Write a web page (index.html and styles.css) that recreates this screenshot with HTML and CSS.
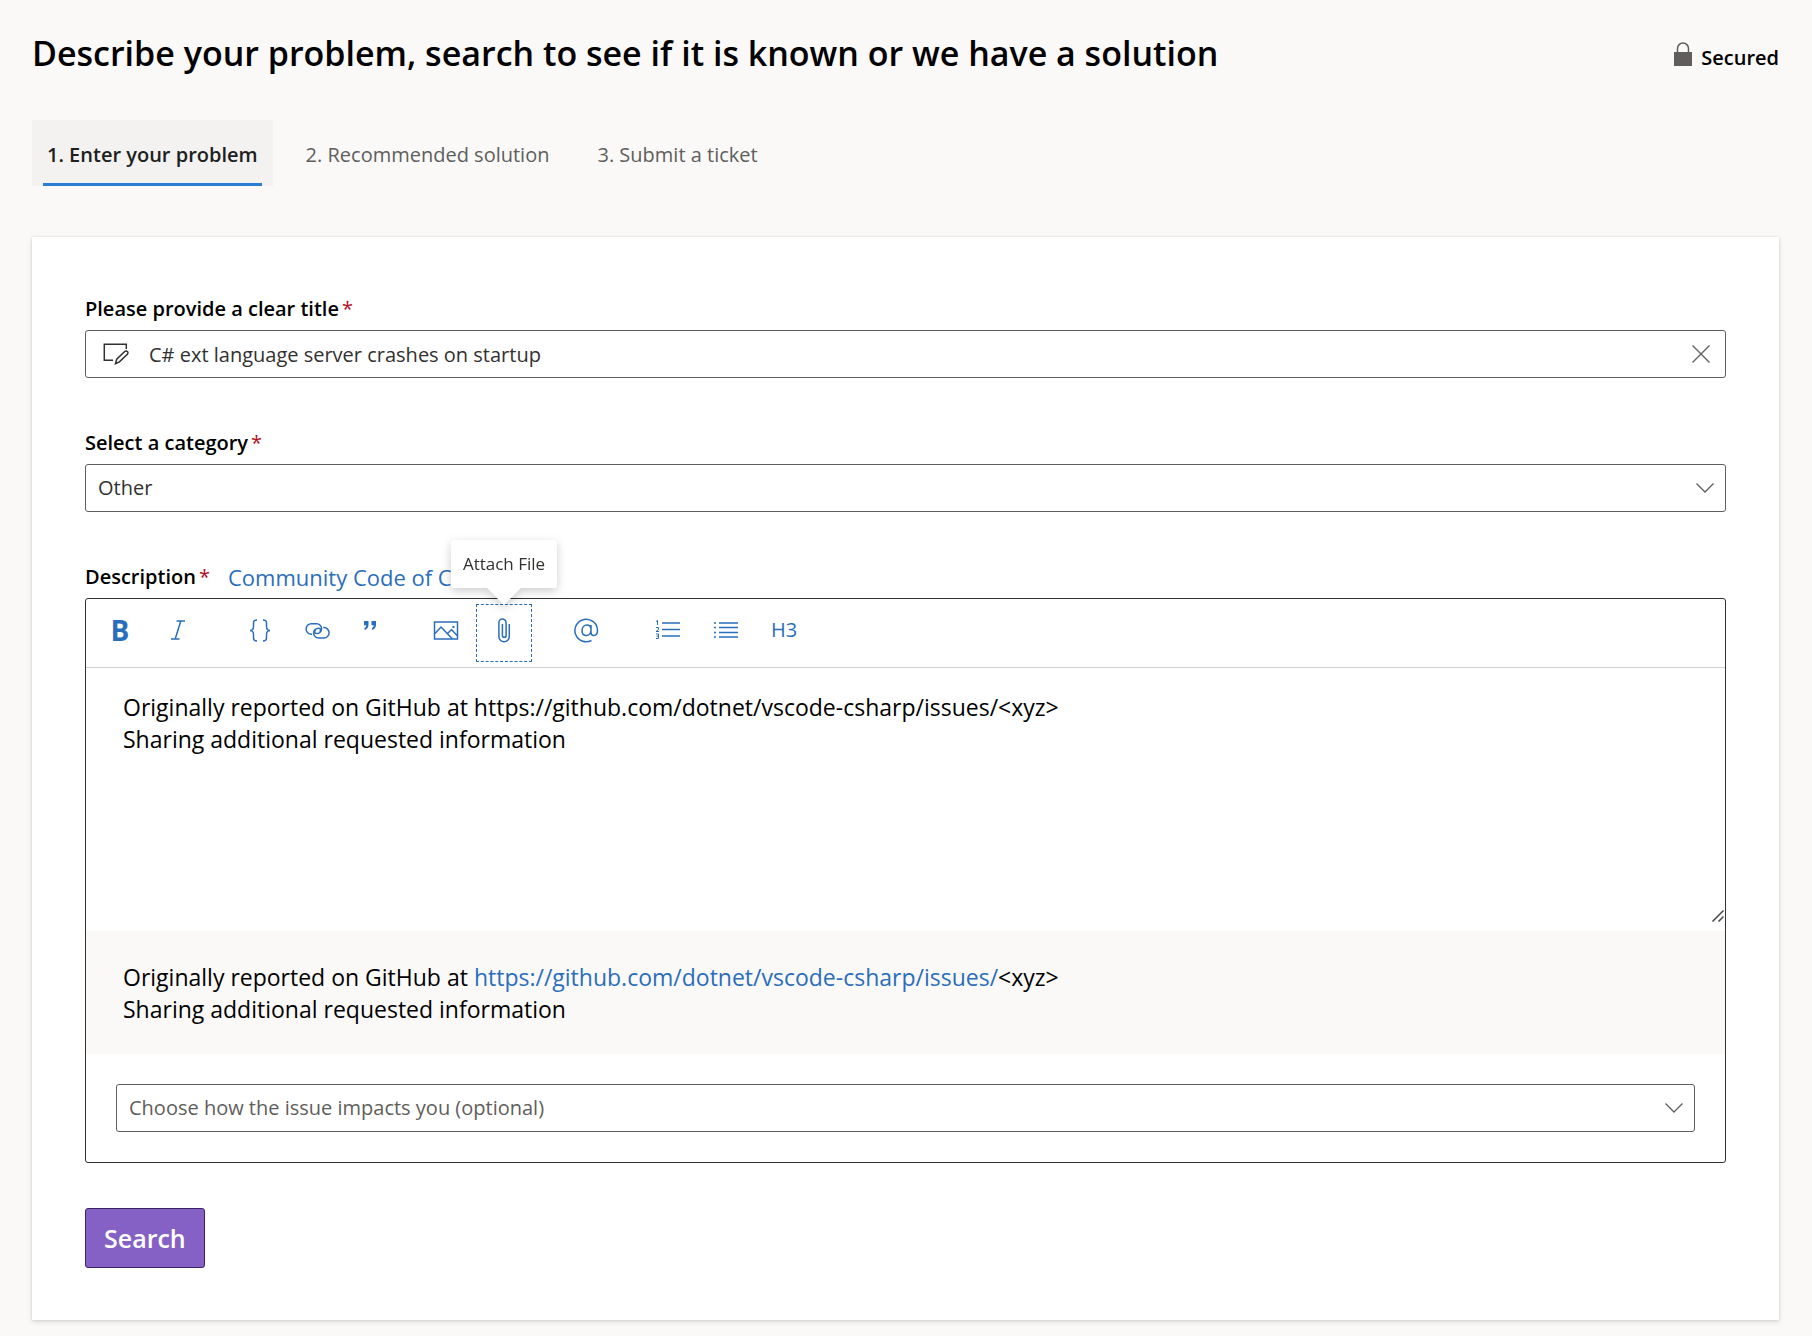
FILE: index.html
```html
<!DOCTYPE html>
<html lang="en">
<head>
<meta charset="utf-8">
<meta name="viewport" content="width=device-width, initial-scale=1">
<title>Report a problem</title>
<link rel="stylesheet" href="styles.css">
</head>
<body>
<main class="page">
  <header class="page-header">
    <h1 class="page-title">Describe your problem, search to see if it is known or we have a solution</h1>
    <div class="secured">
      <svg class="lock" width="20" height="24" viewBox="0 0 20 24" aria-hidden="true">
        <path d="M4.500 11V6.500a5.500 5.500 0 0 1 11 0V11" fill="none" stroke="#605e5c" stroke-width="1.500"/>
        <rect x="1" y="10" width="18" height="14" fill="#605e5c"/>
      </svg>
      <span>Secured</span>
    </div>
  </header>

  <nav class="steps" aria-label="Steps">
    <button type="button" class="step step-active" aria-current="step">1. Enter your problem</button>
    <button type="button" class="step">2. Recommended solution</button>
    <button type="button" class="step">3. Submit a ticket</button>
  </nav>

  <form class="card">
    <div class="field">
      <label class="label" for="title">Please provide a clear title<span class="required">*</span></label>
      <div class="title-box">
        <svg width="26" height="22" viewBox="0 0 26 22" fill="none" stroke="#323130" stroke-width="1.500" aria-hidden="true">
          <path d="M23.300 6V1.300H1.300v16H10"/>
          <path d="M12.500 20.700l1.200-4.500 8-7.700a1.900 1.900 0 0 1 2.700 2.700l-8 7.700z"/>
        </svg>
        <input class="title-input" id="title" type="text" value="C# ext language server crashes on startup">
        <button type="button" class="clear" aria-label="Clear title">
          <svg width="18" height="18" viewBox="0 0 18 18" fill="none" stroke="#605e5c" stroke-width="1.300" aria-hidden="true"><path d="M.5.5l17 17M17.500.5l-17 17"/></svg>
        </button>
      </div>
    </div>

    <div class="field">
      <label class="label" for="category">Select a category<span class="required">*</span></label>
      <div class="select-box">
        <select class="select" id="category"><option>Other</option></select>
        <svg class="chevron" width="18" height="10" viewBox="0 0 18 10" fill="none" stroke="#605e5c" stroke-width="1.300" aria-hidden="true"><path d="M.5.500L9 9l8.500-8.500"/></svg>
      </div>
    </div>

    <div class="field">
      <div class="description-head">
        <label class="label" for="description">Description<span class="required">*</span></label>
        <a class="link conduct" href="#">Community Code of Conduct</a>
      </div>
      <div class="editor">
        <div class="toolbar">
          <div class="group">
            <button type="button" class="tool tool-bold" aria-label="Bold">B</button>
            <button type="button" class="tool" aria-label="Italic">
              <svg width="24" height="24" viewBox="0 0 24 24" aria-hidden="true"><path d="M10.500 3H19M5 21h8.500M14.800 3L9.200 21"/></svg>
            </button>
          </div>
          <div class="group">
            <button type="button" class="tool" aria-label="Code">
              <svg width="24" height="24" viewBox="0 0 24 24" aria-hidden="true"><path d="M9 2C6 2 5.500 3 5.500 5v3.500C5.500 11 4.500 12.500 2 12.500c2.500 0 3.500 1.500 3.500 4V20c0 2 .5 3 3.500 3M15 2c3 0 3.500 1 3.500 3v3.500c0 2.500 1 4 3.500 4-2.500 0-3.500 1.500-3.500 4V20c0 2-.5 3-3.500 3"/></svg>
            </button>
            <button type="button" class="tool" aria-label="Link">
              <svg width="26" height="24" viewBox="0 0 26 24" aria-hidden="true"><path d="M7 16.200h-.7a5.200 5.200 0 0 1 0-10.400h5.400a4.900 4.900 0 0 1 0 9.800c-2.300 0-2.800-2.600-1-3.500M18.200 9.600h.7a5.200 5.200 0 0 1 0 10.400h-5.400a4.900 4.900 0 0 1 0-9.800c2.300 0 2.800 2.600 1 3.500"/></svg>
            </button>
            <button type="button" class="tool tool-narrow" aria-label="Quote">
              <svg width="14" height="24" viewBox="0 0 14 24" aria-hidden="true"><path class="solid" d="M1 3h4.500v3.500c0 3-1.300 4.700-4 5.500v-2c1.200-.5 1.700-1.300 1.700-2.700H1zM8.500 3H13v3.500c0 3-1.300 4.700-4 5.500v-2c1.200-.5 1.700-1.300 1.700-2.700H8.500z"/></svg>
            </button>
          </div>
          <div class="group">
            <button type="button" class="tool" aria-label="Image">
              <svg width="26" height="24" viewBox="0 0 26 24" aria-hidden="true"><path d="M1.500 4h23v17h-23zM1.500 16l6.500-7L19.500 21M14.500 15.500l4-4 6 6.500M19.500 14.500"/><path class="solid" d="M19.500 8h2v2h-2z"/></svg>
            </button>
            <div class="tool-anchor">
              <button type="button" class="tool tool-focused" aria-label="Attach file" aria-describedby="attach-tip">
                <svg width="24" height="26" viewBox="0 0 24 26" aria-hidden="true"><path d="M17.300 7v12.500a5.200 5.200 0 0 1-10.400 0V5.500a3.600 3.600 0 0 1 7.200 0V18.500a1.800 1.800 0 0 1-3.700 0V7"/></svg>
              </button>
              <div class="tooltip" id="attach-tip" role="tooltip">Attach File
                <svg class="tooltip-beak" width="34" height="17" viewBox="0 0 34 17" aria-hidden="true"><path d="M0 0h34L17 17z" fill="#fff"/></svg>
              </div>
            </div>
          </div>
          <div class="group">
            <button type="button" class="tool" aria-label="Mention">
              <svg width="26" height="26" viewBox="0 0 26 26" aria-hidden="true"><path d="M18.500 23.500A11.300 11.300 0 1 1 24.500 13c0 3.500-1.500 5.500-3.700 5.500-2 0-2.800-1.200-2.800-3V8M18 13c0 3.300-2 5.500-4.700 5.500-2.500 0-4.300-1.800-4.300-4.800 0-3.400 2.200-5.700 5-5.700 2.500 0 4 2 4 5z"/></svg>
            </button>
          </div>
          <div class="group">
            <button type="button" class="tool" aria-label="Numbered list">
              <svg width="26" height="24" viewBox="0 0 26 24" aria-hidden="true"><path d="M7 5h18M7 11.500h18M7 18h18"/><path class="fine" d="M1 3.500l1.500-1V7M1 9.500h2.500v2L1 13.500h3M1 16h2.500v4.500H1M1.500 18.200h2"/></svg>
            </button>
            <button type="button" class="tool" aria-label="Bulleted list">
              <svg width="26" height="24" viewBox="0 0 26 24" aria-hidden="true"><path d="M6 5h19M6 9.500h19M6 14.500h19M6 19h19M1 5h2M1 9.500h2M1 14.500h2M1 19h2"/></svg>
            </button>
            <button type="button" class="tool" aria-label="Heading 3">H3</button>
          </div>
        </div>
        <div class="writing">
          <textarea class="description" id="description">Originally reported on GitHub at https://github.com/dotnet/vscode-csharp/issues/&lt;xyz&gt;
Sharing additional requested information</textarea>
          <svg class="grip" width="12" height="12" viewBox="0 0 12 12" fill="none" stroke="#484644" stroke-width="1.500" aria-hidden="true"><path d="M.500 11.500l11-11M6.500 11.500l5-5"/></svg>
        </div>
        <div class="preview">
          Originally reported on GitHub at <a class="link" href="#">https://github.com/dotnet/vscode-csharp/issues/</a>&lt;xyz&gt;<br>
          Sharing additional requested information
        </div>
        <div class="impact">
          <div class="select-box">
            <select class="select select-empty" id="impact" aria-label="Impact"><option>Choose how the issue impacts you (optional)</option></select>
            <svg class="chevron" width="18" height="10" viewBox="0 0 18 10" fill="none" stroke="#605e5c" stroke-width="1.300" aria-hidden="true"><path d="M.5.500L9 9l8.500-8.500"/></svg>
          </div>
        </div>
      </div>
    </div>

    <button type="button" class="search">Search</button>
  </form>
</main>
</body>
</html>
```
FILE: styles.css
```css
* {
  box-sizing: border-box;
}

body {
  margin: 0;
  background: #faf9f8;
  color: #000;
  font-family: "Open Sans", "Noto Sans", sans-serif;
  font-size: 20px;
  line-height: 28px;
}

button,
input,
select,
textarea {
  margin: 0;
  font: inherit;
}

button {
  cursor: pointer;
}

.page {
  padding: 31px 33px 16px 32px;
}

.page-header {
  display: flex;
  align-items: center;
  justify-content: space-between;
  gap: 24px;
}

.page-title {
  margin: 0;
  font-size: 34px;
  line-height: 44px;
  font-weight: 600;
}

.secured {
  display: flex;
  gap: 8px;
  padding-top: 10px;
  font-weight: 600;
}

.lock {
  margin-top: -2px;
}

.steps {
  display: flex;
  gap: 18px;
  margin-top: 45px;
}

.step {
  height: 66px;
  padding: 3px 15px 0;
  border: 0;
  background: none;
  color: #605e5c;
}

.step-active {
  background: linear-gradient(#2b7cd3, #2b7cd3) center bottom / calc(100% - 22px) 3px no-repeat #f3f2f1;
  color: #201f1e;
  font-weight: 600;
}

.card {
  display: flex;
  flex-direction: column;
  align-items: stretch;
  margin-top: 51px;
  padding: 58px 53px 52px;
  background: #fff;
  box-shadow: 0 2px 5px rgba(0, 0, 0, .13), 0 0 2px rgba(0, 0, 0, .11);
}

.field {
  margin-bottom: 51px;
}

.field:last-of-type {
  margin-bottom: 45px;
}

.label {
  display: block;
  padding-bottom: 7px;
  font-weight: 600;
}

.required {
  padding-left: 3px;
  color: #b10e1e;
  font-weight: 400;
}

.title-box {
  display: flex;
  align-items: center;
  gap: 18px;
  height: 48px;
  padding: 0 15px 0 17px;
  border: 1px solid #605e5c;
  border-radius: 3px;
}

.title-input {
  flex: 1;
  min-width: 0;
  padding: 2px 2px 0;
  border: 0;
  outline: 0;
  background: none;
  color: #323130;
}

.clear {
  display: flex;
  padding: 0;
  border: 0;
  background: none;
}

.select-box {
  display: grid;
  align-items: center;
}

.select {
  grid-area: 1 / 1;
  width: 100%;
  height: 48px;
  padding: 0 40px 0 12px;
  border: 1px solid #605e5c;
  border-radius: 3px;
  appearance: none;
  background: #fff;
  color: #323130;
}

.select-empty {
  color: #605e5c;
}

.chevron {
  grid-area: 1 / 1;
  justify-self: end;
  margin-right: 12px;
  pointer-events: none;
}

.link {
  color: #2a6ebb;
  text-decoration: none;
}

.description-head {
  display: flex;
  gap: 18px;
}

.conduct {
  font-size: 22px;
}

.editor {
  border: 1px solid #323130;
  border-radius: 3px;
}

.toolbar {
  display: flex;
  flex-wrap: wrap;
  gap: 26px;
  padding: 5px 6px;
  border-bottom: 1px solid #d2d0ce;
}

.group {
  display: flex;
  gap: 2px;
}

.tool {
  display: flex;
  align-items: center;
  justify-content: center;
  width: 56px;
  height: 58px;
  padding: 0 0 6px;
  border: 1px dashed transparent;
  background: none;
  color: #2a6ebb;
}

.tool svg {
  fill: none;
  stroke: currentColor;
  stroke-width: 1.5px;
}

.tool svg .solid {
  fill: currentColor;
  stroke: none;
}

.tool svg .fine {
  stroke-width: 1px;
}

.tool-bold {
  font-size: 28px;
  font-weight: 700;
}

.tool-narrow {
  width: 44px;
}

.tool-focused {
  border-color: #2a6ebb;
}

.tool-anchor {
  position: relative;
}

.tooltip {
  position: absolute;
  left: 50%;
  bottom: calc(100% + 16px);
  padding: 10px 12px;
  border-radius: 3px;
  background: #fff;
  color: #323130;
  font-size: 17px;
  white-space: nowrap;
  transform: translateX(-50%);
  filter: drop-shadow(0 3px 5px rgba(0, 0, 0, .2));
}

.tooltip-beak {
  position: absolute;
  top: 100%;
  left: 50%;
  margin-left: -17px;
}

.writing {
  display: grid;
}

.description {
  grid-area: 1 / 1;
  width: 100%;
  height: 263px;
  padding: 23px 37px;
  border: 0;
  outline: 0;
  resize: none;
  background: none;
  font-size: 23px;
  line-height: 32px;
}

.grip {
  grid-area: 1 / 1;
  place-self: end;
  margin: 0 1px 9px;
  pointer-events: none;
}

.preview {
  padding: 30px 37px 29px;
  background: #faf9f8;
  font-size: 23px;
  line-height: 32px;
}

.impact {
  padding: 30px;
}

.search {
  align-self: flex-start;
  height: 60px;
  padding: 0 18px;
  border: 1px solid #3b2367;
  border-radius: 3px;
  background: #8661c5;
  color: #fff;
  font-size: 25px;
  font-weight: 600;
}
```
